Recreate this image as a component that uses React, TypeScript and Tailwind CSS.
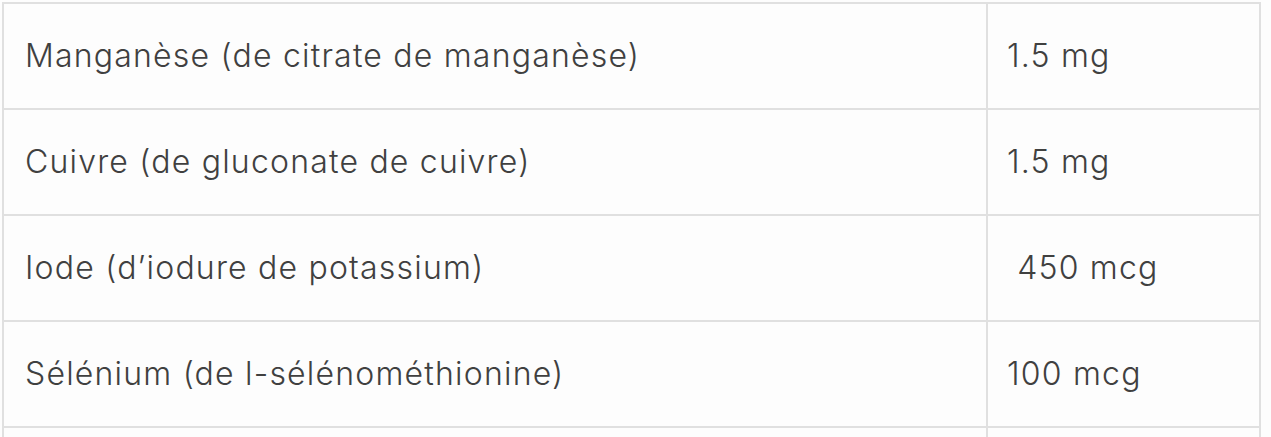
import React from 'react';

export default function App() {
  const rows = [
    { name: 'Manganèse (de citrate de manganèse)', value: '1.5 mg' },
    { name: 'Cuivre (de gluconate de cuivre)', value: '1.5 mg' },
    { name: 'Iode (d’iodure de potassium)', value: '\u00a0450 mcg' },
    { name: 'Sélénium (de l-sélénométhionine)', value: '100 mcg' },
    { name: '', value: '' },
  ];

  return (
    <div className="h-screen bg-[#fdfdfd] pl-[2px] pt-[2px] overflow-hidden">
      <table
        className="w-[1259px] border-collapse text-[32px] font-[350] tracking-[1.2px] text-[#404040]"
        style={{ fontFamily: 'Inter, "Open Sans", sans-serif' }}
      >
        <tbody>
          {rows.map((r, i) => (
            <tr key={i} className="h-[106px]">
              <td className="w-[984px] border-2 border-[#e0e0e0] pl-[21px] align-middle">{r.name}</td>
              <td className="border-2 border-[#e0e0e0] pl-[19px] align-middle">{r.value}</td>
            </tr>
          ))}
        </tbody>
      </table>
    </div>
  );
}
